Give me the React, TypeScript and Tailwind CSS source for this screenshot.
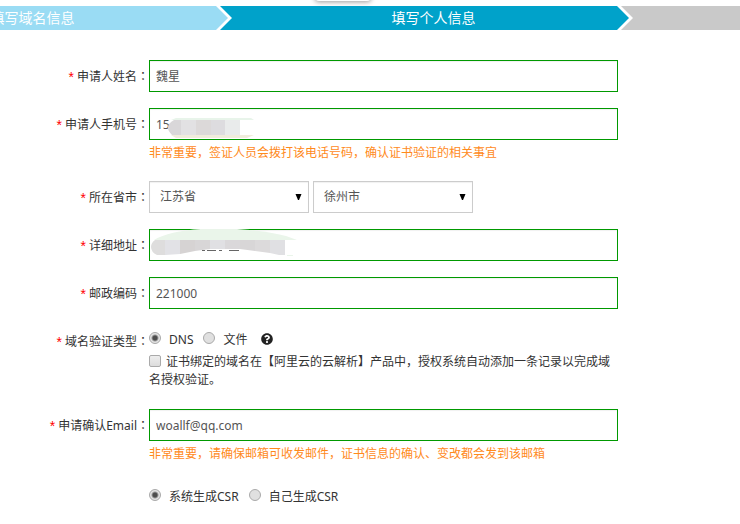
import type { ReactNode } from 'react';
import { FaQuestionCircle } from 'react-icons/fa';

const inputClass =
  'block w-full h-8 border border-[#090] bg-white pl-[6px] pr-2 text-xs text-[#555] outline-none shadow-[inset_0_1px_1px_rgba(0,0,0,0.06)]';
const radioClass =
  'appearance-none size-3 mb-1 shrink-0 rounded-full border border-[#aaa] bg-[#e0e0e0] checked:bg-[radial-gradient(circle,#4d4d4d_0,#4d4d4d_2px,#e4e4e4_4px)]';

function StepArrow({ from, to }: { from: string; to: string }) {
  return (
    <svg width="17" height="24" viewBox="0 0 17 24" className="shrink-0" aria-hidden="true">
      <rect width="17" height="24" fill={to} />
      <path d="M0 0H4L16 12L4 24H0Z" fill="#fff" />
      <path d="M0 0L12 12L0 24Z" fill={from} />
    </svg>
  );
}

function Row({ label, htmlFor, children }: { label?: string; htmlFor?: string; children: ReactNode }) {
  return (
    <div className="flex">
      <div className="flex h-8 w-[149px] shrink-0 items-center justify-end">
        {label && (
          <label htmlFor={htmlFor} className="whitespace-nowrap">
            <span className="mr-[3px] font-['Liberation_Sans',sans-serif] text-sm leading-none text-[#f00] align-[-1px]">*</span>
            {label}
            <span className="font-['Noto_Sans_CJK_JP',sans-serif]">：</span>
          </label>
        )}
      </div>
      <div className="max-w-[469px] min-w-0 flex-1">{children}</div>
    </div>
  );
}

function Hint({ children }: { children: ReactNode }) {
  return <p className="mt-1 mb-[3px] leading-[18px] text-[#ff8a1c]">{children}</p>;
}

function Select({ id, value, label }: { id: string; value: string; label: string }) {
  return (
    <div className="relative w-40">
      <select
        id={id}
        aria-label={label}
        defaultValue={value}
        className="block h-8 w-full appearance-none border border-[#ccc] bg-white pl-[10px] text-xs text-[#555] shadow-[inset_0_1px_1px_rgba(0,0,0,0.06)]"
      >
        <option>{value}</option>
      </select>
      <svg width="7" height="6" viewBox="0 0 7 6" className="pointer-events-none absolute top-[13px] right-[7px]" aria-hidden="true">
        <path d="M0.5 0H6.5L4 6H3Z" fill="#000" />
      </svg>
    </div>
  );
}

function Radio({ name, label, checked }: { name: string; label: string; checked?: boolean }) {
  return (
    <label className="flex items-center gap-2">
      <input type="radio" name={name} defaultChecked={checked} className={radioClass} />
      {label}
    </label>
  );
}

export default function App() {
  return (
    <div className="relative min-h-screen overflow-hidden bg-white pt-[6px] font-['Noto_Sans','Noto_Sans_CJK_SC',sans-serif] text-xs text-[#333]">
      <div className="absolute -top-2 left-[315px] h-[9px] w-14 rounded-sm bg-white shadow-[0_1px_5px_rgba(0,0,0,0.4)]" />

      {/* steps */}
      <ol className="-ml-[168px] flex h-6 text-sm leading-6 text-white">
        <li className="flex w-[401px] shrink-0">
          <span className="flex-1 bg-[#9adcf4] pl-[17px] text-center">填写域名信息</span>
          <StepArrow from="#9adcf4" to="#00a2ca" />
        </li>
        <li className="flex w-[401px] shrink-0">
          <span className="flex-1 bg-[#00a2ca] pl-[17px] text-center">填写个人信息</span>
          <StepArrow from="#00a2ca" to="#c9c9c9" />
        </li>
        <li className="flex-1 bg-[#c9c9c9]" />
      </ol>

      <form className="mt-[30px] flex flex-col gap-4">
        <Row label="申请人姓名" htmlFor="name">
          <input id="name" defaultValue="魏星" className={inputClass} />
        </Row>

        <Row label="申请人手机号" htmlFor="phone">
          <div className="relative">
            <input id="phone" defaultValue="15" className={inputClass} />
            <svg width="90" height="22" viewBox="0 0 90 22" className="pointer-events-none absolute top-[9px] left-[18px]" aria-hidden="true">
              <path d="M9 1H84L87 3H4Z" fill="#e8f4ea" />
              <path d="M4 18H87L80 21H9Z" fill="#f0ecdc" />
              <path d="M7 3H14V18H5Q1 14 1 11Q1 6 7 3Z" fill="#d9d7d9" />
              <path d="M14 3H29V18H14Z" fill="#e2e1e3" />
              <path d="M29 3H44V18H29Z" fill="#dcd9d9" />
              <path d="M44 3H58V18H44Z" fill="#dddcdf" />
              <path d="M58 3H73V18H58Z" fill="#e9ebeb" />
            </svg>
          </div>
          <Hint>非常重要，签证人员会拨打该电话号码，确认证书验证的相关事宜</Hint>
        </Row>

        <Row label="所在省市" htmlFor="province">
          <div className="flex gap-1">
            <Select id="province" label="省" value="江苏省" />
            <Select id="city" label="市" value="徐州市" />
          </div>
        </Row>

        <Row label="详细地址" htmlFor="address">
          <div className="relative">
            <input id="address" className={inputClass} />
            <svg width="150" height="32" viewBox="0 0 150 32" className="pointer-events-none absolute top-0 left-0" aria-hidden="true">
              <path d="M5 11Q20 2 52 0H88Q120 2 137 7L148 11Z" fill="#eaf5ea" />
              <path d="M6 11H16V26H8Q2 23 2 18Q2 14 6 11Z" fill="#dedddd" />
              <path d="M16 11H31V25L16 26Z" fill="#e2e2e6" />
              <path d="M31 11H46V22L31 25Z" fill="#d6d3d3" />
              <path d="M46 11H61V20L46 22Z" fill="#d8d6d7" />
              <path d="M61 11H76V20H61Z" fill="#e0e0e3" />
              <path d="M76 11H91V20H76Z" fill="#dad8da" />
              <path d="M91 11H106V22L91 20Z" fill="#d8d6d7" />
              <path d="M106 11H121V24L106 22Z" fill="#dcdadb" />
              <path d="M121 11H136V26H130L121 24Z" fill="#e0e0e3" />
              <path d="M53 21.5H56M58 21.5H67M70 21.5H73M80 21.5H90" stroke="#666" />
              <path d="M138 26.5H144" stroke="#eaf5ea" />
            </svg>
          </div>
        </Row>

        <Row label="邮政编码" htmlFor="zip">
          <input id="zip" defaultValue="221000" className={inputClass} />
        </Row>

        <Row label="域名验证类型">
          <div className="pt-[6px] pb-1 leading-[18px]">
            <div className="flex items-center gap-[10px]">
              <Radio name="verify" label="DNS" checked />
              <Radio name="verify" label="文件" />
              <FaQuestionCircle className="mb-[2px] ml-1 size-3 text-[#222]" />
            </div>
            <label className="mt-1 block">
              <input
                type="checkbox"
                className="mr-[5px] size-3 appearance-none rounded-xs border border-[#aaa] bg-linear-to-b from-[#eee] to-[#dcdcdc] align-[-1px]"
              />
              证书绑定的域名在【阿里云的云解析】产品中，授权系统自动添加一条记录以完成域名授权验证。
            </label>
          </div>
        </Row>

        <Row label="申请确认Email" htmlFor="email">
          <input id="email" type="email" defaultValue="woallf@qq.com" className={inputClass} />
          <Hint>非常重要，请确保邮箱可收发邮件，证书信息的确认、变改都会发到该邮箱</Hint>
        </Row>

        <Row>
          <div className="flex items-center gap-[10px] pt-[6px] leading-[18px]">
            <Radio name="csr" label="系统生成CSR" checked />
            <Radio name="csr" label="自己生成CSR" />
          </div>
        </Row>
      </form>
    </div>
  );
}
